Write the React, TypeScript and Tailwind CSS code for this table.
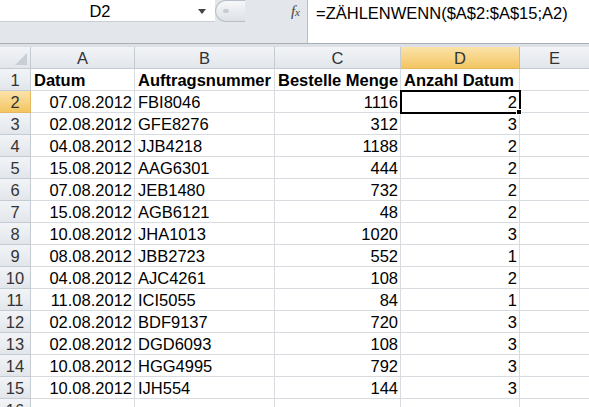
import React from "react";

type Row = [string, string, string, string];

const rows: Row[] = [
  ["07.08.2012", "FBI8046", "1116", "2"],
  ["02.08.2012", "GFE8276", "312", "3"],
  ["04.08.2012", "JJB4218", "1188", "2"],
  ["15.08.2012", "AAG6301", "444", "2"],
  ["07.08.2012", "JEB1480", "732", "2"],
  ["15.08.2012", "AGB6121", "48", "2"],
  ["10.08.2012", "JHA1013", "1020", "3"],
  ["08.08.2012", "JBB2723", "552", "1"],
  ["04.08.2012", "AJC4261", "108", "2"],
  ["11.08.2012", "ICI5055", "84", "1"],
  ["02.08.2012", "BDF9137", "720", "3"],
  ["02.08.2012", "DGD6093", "108", "3"],
  ["10.08.2012", "HGG4995", "792", "3"],
  ["10.08.2012", "IJH554", "144", "3"],
];

const cols = "grid grid-cols-[31px_104px_140px_126px_119px_1fr]";
const hdr =
  "h-[22px] flex items-center justify-center pt-[1px] border-r border-b border-[#c5cbd3] bg-gradient-to-b from-[#f2f4f7] to-[#e2e6eb] text-[#333]";
const hdrSel =
  "h-[22px] flex items-center justify-center pt-[1px] border-r border-b border-[#e2b860] bg-gradient-to-b from-[#fbe3a8] to-[#f3c560] text-[#333]";
const cell =
  "h-[22px] flex items-center pt-[2px] border-r border-b border-[#d8dbe0] pl-[3px] pr-[2px] whitespace-nowrap overflow-hidden";

export default function App() {
  return (
    <div
      className="w-[589px] h-[407px] overflow-hidden bg-white text-[16.5px] text-black"
      style={{ fontFamily: '"Liberation Sans", Arial, sans-serif' }}
    >
      {/* Formula bar */}
      <div className="flex h-[44px] border-b border-[#a8afb8]">
        <div className="w-[215px] flex flex-col">
          <div className="h-[22px] bg-white flex items-center pt-[2px] relative border-b border-[#c9ced6]">
            <span className="w-[200px] text-center">D2</span>
            <span className="absolute left-[198px] top-[9px] w-0 h-0 border-l-[4px] border-r-[4px] border-t-[5px] border-l-transparent border-r-transparent border-t-[#444]" />
          </div>
          <div className="flex-1 bg-[#e3e7ec]" />
        </div>
        <div className="w-[93px] flex flex-col bg-[#e3e7ec] border-r border-[#b7bec8]">
          <div className="h-[22px] flex items-center relative">
            <div className="h-[22px] w-[30px] rounded-l-full bg-gradient-to-b from-[#f6f7f9] to-[#dde1e6] border border-r-0 border-[#b8bfc8] flex items-center pl-[7px]">
              <span className="w-[6px] h-[4px] rounded-full bg-[#c8cdd4]" />
            </div>
            <span
              className="ml-auto mr-[7px] italic text-[15px] text-[#444]"
              style={{ fontFamily: '"Liberation Serif", "Times New Roman", serif' }}
            >
              f<span className="text-[11px]">x</span>
            </span>
          </div>
        </div>
        <div className="flex-1 bg-white pl-[8px] pt-[1px]">=ZÄHLENWENN($A$2:$A$15;A2)</div>
      </div>
      <div className="h-[3px] bg-[#dde1e6]" />

      {/* Sheet */}
      <div className={cols}>
        <div className={hdr + " relative"}>
          <svg className="absolute right-[3px] bottom-[3px]" width="12" height="12" viewBox="0 0 12 12">
            <polygon points="12,0 12,12 0,12" fill="#c9ced6" />
          </svg>
        </div>
        <div className={hdr}>A</div>
        <div className={hdr}>B</div>
        <div className={hdr}>C</div>
        <div className={hdrSel}>D</div>
        <div className={hdr + " border-r-0"}>E</div>

        <div className={hdr}>1</div>
        <div className={cell + " font-bold"}>Datum</div>
        <div className={cell + " font-bold"}>Auftragsnummer</div>
        <div className={cell + " font-bold"}>Bestelle Menge</div>
        <div className={cell + " font-bold"}>Anzahl Datum</div>
        <div className={cell + " border-r-0"} />

        {rows.map((r, i) => (
          <React.Fragment key={i}>
            <div className={i === 0 ? hdrSel : hdr}>{i + 2}</div>
            <div className={cell + " justify-end"}>{r[0]}</div>
            <div className={cell}>{r[1]}</div>
            <div className={cell + " justify-end"}>{r[2]}</div>
            {i === 0 ? (
              <div className="h-[22px] flex items-center justify-end pt-[2px] px-[2px] relative outline outline-2 outline-black -outline-offset-1 border-r border-b border-[#d8dbe0]">
                {r[3]}
                <span className="absolute -right-[3px] -bottom-[3px] w-[6px] h-[6px] bg-black border border-white" />
              </div>
            ) : (
              <div className={cell + " justify-end"}>{r[3]}</div>
            )}
            <div className={cell + " border-r-0"} />
          </React.Fragment>
        ))}

        <div className={hdr}>16</div>
        <div className={cell} />
        <div className={cell} />
        <div className={cell} />
        <div className={cell} />
        <div className={cell + " border-r-0"} />
      </div>
    </div>
  );
}
